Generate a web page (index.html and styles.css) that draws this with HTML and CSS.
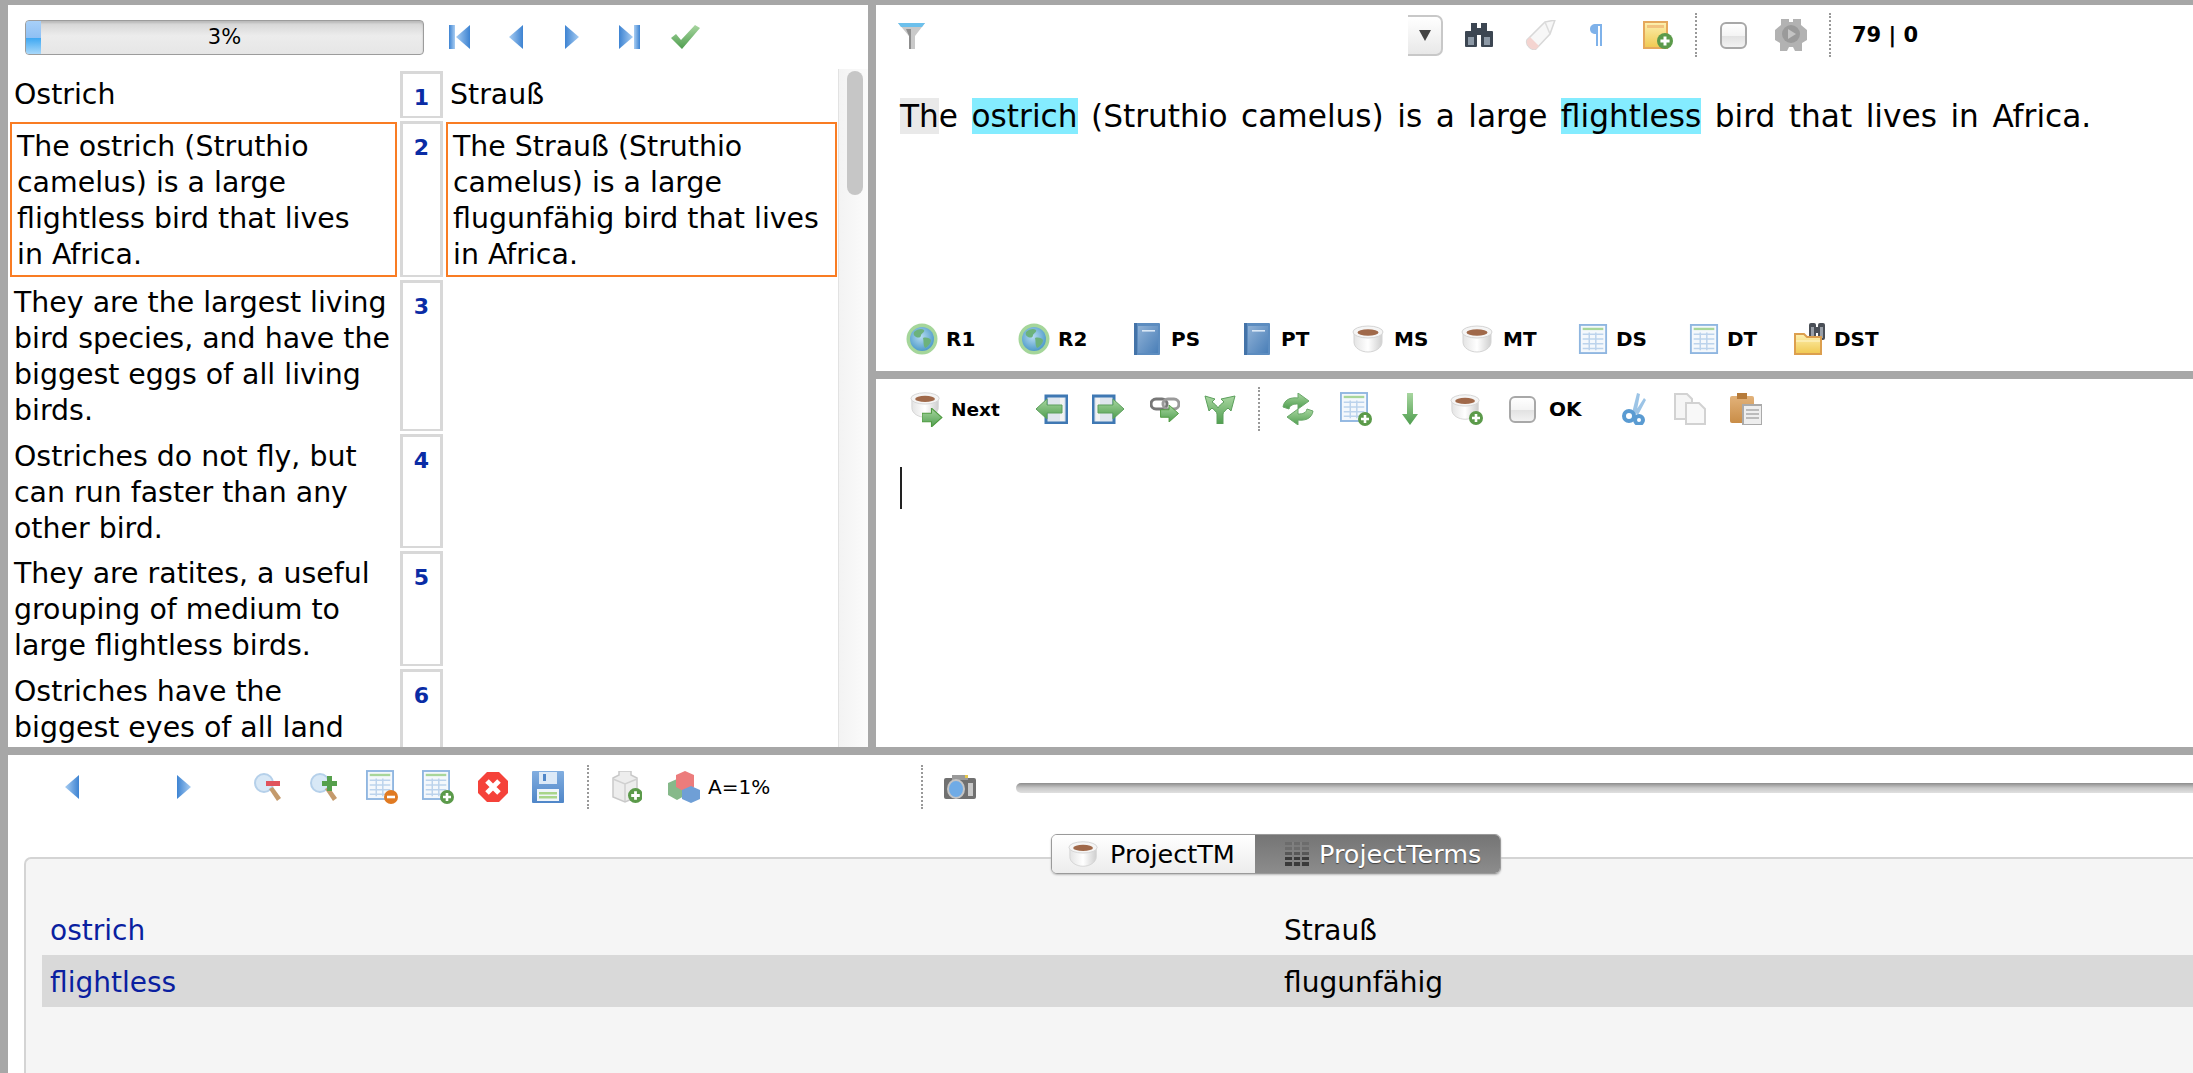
FILE: index.html
```html
<!DOCTYPE html>
<html lang="en">
<head>
<meta charset="utf-8">
<title>OmegaT-style editor</title>
<link rel="stylesheet" href="styles.css">
</head>
<body>
<svg class="defs" width="0" height="0" aria-hidden="true">
  <defs>
    <linearGradient id="gBlue" x1="0" y1="0" x2="0" y2="1"><stop offset="0" stop-color="#a9cdf0"/><stop offset="1" stop-color="#3f86d0"/></linearGradient>
    <linearGradient id="gNavR" x1="0" y1="0" x2="1" y2="0"><stop offset="0" stop-color="#3d83d2"/><stop offset="1" stop-color="#a8cdf2"/></linearGradient>
    <linearGradient id="gNavL" x1="0" y1="0" x2="1" y2="0"><stop offset="0" stop-color="#a8cdf2"/><stop offset="1" stop-color="#3d83d2"/></linearGradient>
    <linearGradient id="gGreen" x1="0" y1="0" x2="0" y2="1"><stop offset="0" stop-color="#a8d6a0"/><stop offset="1" stop-color="#4f9e4f"/></linearGradient>
    <linearGradient id="gBook" x1="0" y1="0" x2="1" y2="1"><stop offset="0" stop-color="#8fb1d6"/><stop offset="1" stop-color="#4a7fb8"/></linearGradient>
    <linearGradient id="gCup" x1="0" y1="0" x2="1" y2="0"><stop offset="0" stop-color="#e4e4e4"/><stop offset=".5" stop-color="#fff"/><stop offset="1" stop-color="#cfcfcf"/></linearGradient>
    <linearGradient id="gFolder" x1="0" y1="0" x2="0" y2="1"><stop offset="0" stop-color="#fdf0b0"/><stop offset="1" stop-color="#f0c850"/></linearGradient>
    <linearGradient id="gPaste" x1="0" y1="0" x2="0" y2="1"><stop offset="0" stop-color="#e2b27a"/><stop offset="1" stop-color="#c98d47"/></linearGradient>
    <linearGradient id="gSave" x1="0" y1="0" x2="0" y2="1"><stop offset="0" stop-color="#82aee0"/><stop offset="1" stop-color="#4f86c8"/></linearGradient>
    <radialGradient id="gGlobe" cx=".45" cy=".4" r=".6"><stop offset="0" stop-color="#b6dcf2"/><stop offset="1" stop-color="#4f9bc9"/></radialGradient>

    <symbol id="i-first" viewBox="0 0 22 24"><rect x="0" y="0" width="6" height="24" fill="url(#gNavR)"/><path d="M21 0v24L7 12z" fill="url(#gNavL)"/></symbol>
    <symbol id="i-prev" viewBox="0 0 16 24"><path d="M15 0v24L1 12z" fill="url(#gNavL)"/></symbol>
    <symbol id="i-next" viewBox="0 0 16 24"><path d="M1 0v24l14-12z" fill="url(#gNavR)"/></symbol>
    <symbol id="i-last" viewBox="0 0 22 24"><path d="M1 0v24l14-12z" fill="url(#gNavR)"/><rect x="16" y="0" width="6" height="24" fill="url(#gNavL)"/></symbol>
    <symbol id="i-check" viewBox="0 0 30 24"><path d="M1 13l5-4 5 6L25 0l5 3-18 21z" fill="url(#gGreen)"/></symbol>

    <symbol id="i-plus" viewBox="0 0 14 14"><circle cx="7" cy="7" r="7" fill="#5b9a4a"/><path d="M7 3v8M3 7h8" stroke="#fff" stroke-width="2.6"/></symbol>
    <symbol id="i-minus" viewBox="0 0 14 14"><circle cx="7" cy="7" r="7" fill="#e07a22"/><path d="M3 7h8" stroke="#fff" stroke-width="2.6"/></symbol>
    <symbol id="i-goarrow" viewBox="0 0 20 18"><path d="M0 5h9V0l10 9-10 9v-5H0z" fill="url(#gGreen)" stroke="#4e9a3f"/></symbol>

    <symbol id="i-globe" viewBox="0 0 32 32"><circle cx="16" cy="16" r="15.5" fill="#a5d69a"/><circle cx="16" cy="16" r="12" fill="url(#gGlobe)"/><path d="M8 9c3-3 8-4 10-2 1 2-2 3-3 5 0 3-3 3-5 2-2-1-3-3-2-5zM17 15c3-1 7 0 8 2 0 3-3 7-6 8-2-3-1-6-2-10z" fill="#6cb27c"/></symbol>
    <symbol id="i-book" viewBox="0 0 26 32"><rect x="0" y="0" width="26" height="32" rx="1" fill="#5d8dc0"/><rect x="4" y="3" width="20" height="27" fill="url(#gBook)"/><rect x="8" y="7" width="13" height="1.6" fill="#d9e7f5"/><rect x="0" y="0" width="3" height="32" fill="#4473a8"/></symbol>
    <symbol id="i-cup" viewBox="0 0 34 28"><path d="M2 7h28v10c0 6-7 10-14 10S2 23 2 17z" fill="url(#gCup)" stroke="#d4d4d4"/><ellipse cx="16" cy="7" rx="15" ry="6" fill="#f5f5f5" stroke="#d4d4d4"/><ellipse cx="16" cy="7.5" rx="10.5" ry="3.2" fill="#a0694a"/></symbol>
    <symbol id="i-cupnext" viewBox="0 0 34 36"><use href="#i-cup" x="0" y="0" width="32" height="28"/><use href="#i-goarrow" x="12" y="17" width="21" height="19"/></symbol>
    <symbol id="i-cupadd" viewBox="0 0 34 32"><use href="#i-cup" x="0" y="0" width="32" height="28"/><use href="#i-plus" x="19" y="18" width="14" height="14"/></symbol>

    <symbol id="i-table" viewBox="0 0 30 32"><rect x="1" y="1" width="28" height="30" fill="#f4f8fc" stroke="#8fb6e0" stroke-width="2"/><rect x="4" y="4" width="22" height="2.5" fill="#a8d69a"/><path d="M4 11h22M4 16h22M4 21h22M4 26h22M11 9v19M18 9v19" stroke="#bcd3ec" stroke-width="1.6"/></symbol>
    <symbol id="i-tableadd" viewBox="0 0 32 34"><use href="#i-table" x="0" y="0" width="28" height="30"/><use href="#i-plus" x="18" y="20" width="14" height="14"/></symbol>
    <symbol id="i-tabledel" viewBox="0 0 32 34"><use href="#i-table" x="0" y="0" width="28" height="30"/><use href="#i-minus" x="18" y="20" width="14" height="14"/></symbol>

    <symbol id="i-folderbin" viewBox="0 0 32 32"><g fill="#4a4f57"><rect x="15" y="0" width="7" height="17" rx="2"/><rect x="24" y="0" width="7" height="17" rx="2"/><rect x="21" y="4" width="4" height="6"/></g><path d="M17 4h3v11h-3zM26 4h3v11h-3z" fill="#9aa0a8"/><path d="M1 11h9l3 3h14v17H1z" fill="url(#gFolder)" stroke="#dc9f4e" stroke-width="2"/><path d="M2 18h24" stroke="#fff7cf"/></symbol>

    <symbol id="i-filter" viewBox="0 0 27 28"><path d="M0 2h27L17 15v13h-6V15z" fill="#c9c9c9"/><path d="M8 8h5v20h-2V15z" fill="#8d8d8d"/><path d="M0 2h27l-3 4H3z" fill="#6cc0ec"/></symbol>
    <symbol id="i-binoc" viewBox="0 0 28 24"><g fill="#3c4652"><rect x="6" y="0" width="6" height="9"/><rect x="16" y="0" width="6" height="9"/><rect x="0" y="8" width="12" height="16" rx="1"/><rect x="16" y="8" width="12" height="16" rx="1"/><rect x="11" y="5" width="6" height="7"/></g><path d="M3 14h6v8H3zM19 14h6v8h-6z" fill="#8d99a6"/></symbol>
    <symbol id="i-eraser" viewBox="0 0 34 30"><path d="M22 2l10-2-5 14L13 29c-4 2-11-4-9-9z" fill="#f7f7f7" stroke="#d8d8d8" stroke-width="1.5"/><path d="M4 20c-2 5 5 11 9 9l3-3-9-9z" fill="#f4d4d0"/><path d="M22 2l5 12" stroke="#dcdcdc" stroke-width="1.5"/></symbol>
    <symbol id="i-pilcrow" viewBox="0 0 14 24"><path d="M6 1C2 1 0 3 0 6s2 5 6 5v12h2V3h2v20h2V1z" fill="#7fb2ea"/></symbol>
    <symbol id="i-note" viewBox="0 0 30 28"><rect x="1" y="1" width="23" height="26" fill="url(#gFolder)" stroke="#e5a85c" stroke-width="2"/><rect x="4" y="4" width="17" height="3" fill="#f2c37e"/><use href="#i-plus" x="14" y="12" width="16" height="16"/></symbol>
    <symbol id="i-gear" viewBox="0 0 32 32"><path d="M6 0h8v3h4V0h8v6l6 5v10l-5 3v8h-7l-2-4h-4l-2 4H5v-8l-5-3V11l6-5z" fill="#b2b2b2"/><circle cx="16" cy="15" r="9" fill="#9a9a9a"/><path d="M13 10l8 5-8 5z" fill="#c4c4c4"/></symbol>

    <symbol id="i-srcback" viewBox="0 0 32 30"><rect x="10" y="2" width="21" height="27" fill="#dfe6ee" stroke="#3f78b3" stroke-width="3"/><rect x="24" y="4" width="4" height="23" fill="#f2f2f2"/><path d="M0 15L11 5v6h15v8H11v6z" fill="url(#gGreen)" stroke="#5c9f5c"/></symbol>
    <symbol id="i-srcfwd" viewBox="0 0 32 30"><rect x="1" y="2" width="21" height="27" fill="#dfe6ee" stroke="#3f78b3" stroke-width="3"/><rect x="4" y="4" width="4" height="23" fill="#f2f2f2"/><path d="M32 15L21 5v6H6v8h15v6z" fill="url(#gGreen)" stroke="#5c9f5c"/></symbol>
    <symbol id="i-link" viewBox="0 0 30 26"><rect x="1" y="3" width="16" height="10" rx="5" fill="none" stroke="#777" stroke-width="3"/><rect x="13" y="3" width="16" height="10" rx="5" fill="none" stroke="#9a9a9a" stroke-width="3"/><use href="#i-goarrow" x="10" y="9" width="20" height="17"/></symbol>
    <symbol id="i-fork" viewBox="0 0 32 30"><path d="M13 30h6V20c0-2 3-4 5-6l3 3 4-15-14 3 3 3c-3 2-5 4-6 6-1-2-3-4-6-6l3-3L1 2l4 15 3-3c2 2 5 4 5 6z" fill="url(#gGreen)" stroke="#5c9f5c"/></symbol>
    <symbol id="i-sync" viewBox="0 0 34 32"><path d="M2 14C3 7 9 4 17 5V0l11 8-11 8v-5c-5 0-8 1-9 5z" fill="url(#gGreen)" stroke="#6aa86a"/><path d="M32 18c-1 7-7 10-15 9v5L6 24l11-8v5c5 0 8-1 9-5z" fill="url(#gGreen)" stroke="#6aa86a"/></symbol>
    <symbol id="i-down" viewBox="0 0 16 32"><path d="M5 0h6v21h5l-8 11-8-11h5z" fill="url(#gGreen)"/></symbol>
    <symbol id="i-cut" viewBox="0 0 24 32"><path d="M10 20L15 0l3 1-4 21zM13 19L22 5l2 2-8 15z" fill="#9cc4e6"/><circle cx="7" cy="23" r="5" fill="none" stroke="#5a9bd2" stroke-width="4"/><circle cx="17" cy="27" r="4" fill="none" stroke="#5a9bd2" stroke-width="4"/></symbol>
    <symbol id="i-copy" viewBox="0 0 32 32"><path d="M1 1h12l5 5v20H1z" fill="#f5f5f5" stroke="#d2d2d2" stroke-width="2"/><path d="M12 10h13l6 6v15H12z" fill="#f8f8f8" stroke="#d2d2d2" stroke-width="2"/></symbol>
    <symbol id="i-paste" viewBox="0 0 32 32"><rect x="0" y="3" width="24" height="27" rx="2" fill="url(#gPaste)"/><rect x="7" y="0" width="10" height="6" fill="#b67b3a"/><rect x="13" y="12" width="19" height="20" fill="#eee" stroke="#aaa" stroke-width="2"/><path d="M16 17h13M16 21h13M16 25h13" stroke="#aaa" stroke-width="1.6"/></symbol>

    <symbol id="i-zoomout" viewBox="0 0 28 28"><circle cx="10" cy="10" r="9" fill="#d8e8f6" stroke="#b5d0ea" stroke-width="2"/><path d="M15 16l4-2 8 11-4 3z" fill="#c49a6c"/><rect x="12" y="8" width="14" height="5" fill="#e0535c"/></symbol>
    <symbol id="i-zoomin" viewBox="0 0 28 28"><circle cx="10" cy="10" r="9" fill="#d8e8f6" stroke="#b5d0ea" stroke-width="2"/><path d="M15 16l4-2 8 11-4 3z" fill="#c49a6c"/><path d="M17 3h5v5h5v5h-5v5h-5v-5h-5V8h5z" fill="#56a04c"/></symbol>
    <symbol id="i-stop" viewBox="0 0 30 30"><path d="M9 0h12l9 9v12l-9 9H9l-9-9V9z" fill="#f5423a"/><path d="M9 9l12 12M21 9L9 21" stroke="#fff" stroke-width="5"/></symbol>
    <symbol id="i-save" viewBox="0 0 32 32"><rect x="0" y="0" width="32" height="32" rx="1" fill="url(#gSave)"/><rect x="7" y="1" width="18" height="12" fill="#dce9f7"/><rect x="11" y="3" width="3" height="7" fill="#4f86c8"/><rect x="5" y="18" width="22" height="12" fill="#f0f5fa"/><rect x="7" y="21" width="18" height="2.5" fill="#a9d58a"/><rect x="7" y="25" width="18" height="2.5" fill="#a9d58a"/></symbol>
    <symbol id="i-blocks" viewBox="0 0 32 32"><path d="M3 7l6-3v-4h12v4l6 3v19l-12 5-12-5z" fill="#ededed" stroke="#c9c9c9" stroke-width="1.5"/><path d="M3 8l12 5 12-5M15 13v17" stroke="#d0d0d0" stroke-width="1.5" fill="none"/><use href="#i-plus" x="18" y="17" width="15" height="15"/></symbol>
    <symbol id="i-color" viewBox="0 0 32 32"><path d="M0 12l9-4 9 4v12l-9 5-9-5z" fill="#86b98a"/><path d="M8 4l9-4 9 4v12l-9 5-9-5z" fill="#ec7c7c"/><path d="M14 19l9-4 9 4v9l-9 4-9-4z" fill="#6f9fd6"/></symbol>
    <symbol id="i-camera" viewBox="0 0 32 24"><rect x="0" y="3" width="32" height="21" rx="2" fill="#707070"/><rect x="8" y="0" width="16" height="5" fill="#9a9a9a"/><rect x="21" y="0" width="3" height="3" fill="#e6c84c"/><ellipse cx="12" cy="14" rx="8" ry="9" fill="#6fabe6" stroke="#c4c4c4" stroke-width="2"/><rect x="24" y="8" width="5" height="13" fill="#c8c8c8"/></symbol>
    <symbol id="i-terms" viewBox="0 0 24 24"><path d="M0 20h24v4H0zM0 15h24v3H0z" fill="#3a3a3a"/><path d="M0 10h24v3H0z" fill="#575757"/><path d="M0 5h24v3H0zM0 0h24v3H0z" fill="#6c6c6c"/><path d="M7 0h2v24H7zM15 0h2v24h-2z" fill="#808080"/></symbol>
  </defs>
</svg>

<div class="app">
  <section class="pane pane-segments">
    <div class="seg-toolbar">
      <div class="progress"><span class="progress-fill"></span><span class="progress-label">3%</span></div>
      <div class="nav-icons">
        <svg width="22" height="24"><use href="#i-first"/></svg>
        <svg width="16" height="24"><use href="#i-prev"/></svg>
        <svg width="16" height="24"><use href="#i-next"/></svg>
        <svg width="22" height="24"><use href="#i-last"/></svg>
        <svg width="30" height="24"><use href="#i-check"/></svg>
      </div>
    </div>
    <div class="seg-scroller">
      <div class="seg-grid">
        <div class="seg seg-first">Ostrich</div><div class="num num-first">1</div><div class="seg seg-first">Strauß</div>
        <div class="seg seg-active">The ostrich (Struthio<br>camelus) is a large<br>flightless bird that lives<br>in Africa.</div><div class="num">2</div><div class="seg seg-active">The Strauß (Struthio<br>camelus) is a large<br>flugunfähig bird that lives<br>in Africa.</div>
        <div class="seg">They are the largest living<br>bird species, and have the<br>biggest eggs of all living<br>birds.</div><div class="num">3</div><div class="seg"></div>
        <div class="seg">Ostriches do not fly, but<br>can run faster than any<br>other bird.</div><div class="num">4</div><div class="seg"></div>
        <div class="seg">They are ratites, a useful<br>grouping of medium to<br>large flightless birds.</div><div class="num">5</div><div class="seg"></div>
        <div class="seg seg-last">Ostriches have the<br>biggest eyes of all land</div><div class="num seg-last">6</div><div class="seg seg-last"></div>
      </div>
      <div class="scrollbar"><span class="scroll-thumb"></span></div>
    </div>
  </section>

  <div class="right-col">
    <section class="pane pane-source">
      <div class="src-toolbar">
        <svg width="27" height="28"><use href="#i-filter"/></svg>
        <span class="combo"><span class="combo-caret"></span></span>
        <svg width="28" height="24"><use href="#i-binoc"/></svg>
        <svg width="34" height="30"><use href="#i-eraser"/></svg>
        <svg width="14" height="24"><use href="#i-pilcrow"/></svg>
        <svg width="30" height="28"><use href="#i-note"/></svg>
        <span class="vsep"></span>
        <span class="check"></span>
        <svg width="32" height="32"><use href="#i-gear"/></svg>
        <span class="vsep"></span>
        <span class="counter">79 | 0</span>
      </div>
      <p class="source-text"><span class="hl-seen">Th</span>e <span class="hl-term">ostrich</span> (Struthio camelus) is a large <span class="hl-term">flightless</span> bird that lives in Africa.</p>
      <div class="ref-bar">
        <span class="ref"><svg width="32" height="32"><use href="#i-globe"/></svg>R1</span>
        <span class="ref"><svg width="32" height="32"><use href="#i-globe"/></svg>R2</span>
        <span class="ref ref-wide"><svg width="26" height="32"><use href="#i-book"/></svg>PS</span>
        <span class="ref ref-wide"><svg width="26" height="32"><use href="#i-book"/></svg>PT</span>
        <span class="ref"><svg width="34" height="28"><use href="#i-cup"/></svg>MS</span>
        <span class="ref"><svg width="34" height="28"><use href="#i-cup"/></svg>MT</span>
        <span class="ref"><svg width="30" height="30"><use href="#i-table"/></svg>DS</span>
        <span class="ref"><svg width="30" height="30"><use href="#i-table"/></svg>DT</span>
        <span class="ref"><svg width="32" height="32"><use href="#i-folderbin"/></svg>DST</span>
      </div>
    </section>

    <section class="pane pane-edit">
      <div class="edit-toolbar">
        <span class="ref ref-next"><svg width="34" height="36"><use href="#i-cupnext"/></svg>Next</span>
        <svg width="32" height="30"><use href="#i-srcback"/></svg>
        <svg width="32" height="30"><use href="#i-srcfwd"/></svg>
        <svg width="30" height="26"><use href="#i-link"/></svg>
        <svg width="32" height="30"><use href="#i-fork"/></svg>
        <span class="vsep"></span>
        <svg width="34" height="32"><use href="#i-sync"/></svg>
        <svg width="32" height="34"><use href="#i-tableadd"/></svg>
        <svg width="16" height="32"><use href="#i-down"/></svg>
        <svg width="34" height="32"><use href="#i-cupadd"/></svg>
        <span class="ref ref-ok"><span class="check"></span>OK</span>
        <svg width="24" height="32"><use href="#i-cut"/></svg>
        <svg width="32" height="32"><use href="#i-copy"/></svg>
        <svg width="32" height="32"><use href="#i-paste"/></svg>
      </div>
      <div class="caret"></div>
    </section>
  </div>

  <section class="pane pane-bottom">
    <div class="bottom-toolbar">
      <svg width="16" height="24"><use href="#i-prev"/></svg>
      <svg width="16" height="24"><use href="#i-next"/></svg>
      <svg width="28" height="28"><use href="#i-zoomout"/></svg>
      <svg width="28" height="28"><use href="#i-zoomin"/></svg>
      <svg width="32" height="34"><use href="#i-tabledel"/></svg>
      <svg width="32" height="34"><use href="#i-tableadd"/></svg>
      <svg width="30" height="30"><use href="#i-stop"/></svg>
      <svg width="32" height="32"><use href="#i-save"/></svg>
      <span class="vsep"></span>
      <svg width="32" height="32"><use href="#i-blocks"/></svg>
      <span class="match"><svg width="32" height="32"><use href="#i-color"/></svg>A=1%</span>
      <span class="vsep"></span>
      <svg width="32" height="24"><use href="#i-camera"/></svg>
      <span class="slider"></span>
    </div>
    <div class="tab-panel">
      <div class="tabs">
        <span class="tab"><svg width="32" height="28"><use href="#i-cup"/></svg>ProjectTM</span>
        <span class="tab tab-on"><svg width="24" height="24"><use href="#i-terms"/></svg>ProjectTerms</span>
      </div>
      <div class="terms">
        <div class="term-row"><span class="term-src">ostrich</span><span>Strauß</span></div>
        <div class="term-row term-row-on"><span class="term-src">flightless</span><span>flugunfähig</span></div>
      </div>
    </div>
  </section>
</div>
</body>
</html>
```

FILE: styles.css
```css
* { box-sizing: border-box; }
html, body { margin: 0; height: 100%; overflow: hidden; }
body { background: #a7a7a7; font-family: "DejaVu Sans", sans-serif; color: #000; }
.defs { position: absolute; }
svg { display: block; flex: none; }

.app {
  width: 2193px;
  height: 1073px;
  padding: 5px 0 0 8px;
  display: grid;
  grid-template-columns: 860px 1317px;
  grid-template-rows: 742px 318px;
  gap: 8px;
}
.pane { background: #fff; overflow: hidden; }

/* segments pane */
.pane-segments { display: flex; flex-direction: column; }
.seg-toolbar { height: 64px; flex: none; padding-left: 17px; display: flex; align-items: center; }
.progress {
  width: 399px; height: 35px; position: relative;
  margin-top: 1px;
  border: 1px solid #9c9c9c; border-radius: 4px;
  background: linear-gradient(#d2d2d2, #ececec 45%, #e6e6e6);
  display: flex; align-items: center; justify-content: center;
  box-shadow: inset 0 2px 2px #bbb;
}
.progress-fill {
  position: absolute; left: 0; top: 0; bottom: 0; width: 15px;
  border-radius: 3px 0 0 3px;
  background: linear-gradient(#a8d0f8, #8fc0f4 50%, #3fa8f2 52%, #a8d8fa);
}
.progress-label { font-size: 21px; margin-top: -2px; }
.nav-icons {
  margin-left: 25px;
  display: grid;
  grid-template-columns: 59px 56px 54px 52px auto;
  align-items: center;
}
.seg-scroller { flex: 1; min-height: 0; display: flex; overflow: hidden; }
.seg-grid {
  width: 830px; flex: none;
  padding: 2px 0 0 2px;
  display: grid;
  grid-template-columns: 387px 43px 391px;
  grid-auto-rows: max-content;
  column-gap: 3px;
  row-gap: 3px;
  align-content: start;
  font-size: 28.4px;
  line-height: 36px;
}
.seg { padding: 5px 2px 1.5px 4px; white-space: nowrap; }
.seg-first { padding: 6px 2px 5px 4px; }
.seg-active { border: 2px solid #f97c23; padding: 5px 2px 2px 5px; margin-top: 1px; }
.seg-last { height: 100px; }
.num {
  border: 3px solid #d8d8d8; border-bottom-width: 2px;
  font-weight: 700; font-size: 22px; line-height: 30px;
  color: #0a2ca5; text-align: center;
  padding-top: 9px;
}
.num-first { height: 47px; }
.scrollbar {
  width: 30px; flex: none;
  border-left: 1px solid #e2e2e2;
  background: linear-gradient(90deg, #f3f3f3, #fbfbfb);
  padding: 2px 5px 0 8px;
}
.scroll-thumb { display: block; width: 16px; height: 124px; border-radius: 8px; background: #c6c6c6; }

/* right column */
.right-col { display: grid; grid-template-rows: 366px 368px; gap: 8px; min-width: 0; }
.pane-source { display: flex; flex-direction: column; }
.src-toolbar {
  height: 60px; flex: none; padding-left: 22px;
  display: grid;
  grid-template-columns: 510px 57px 58px 67px 53px 52px 25px 55px 54px 23px auto;
  align-items: center; justify-content: start;
}
.combo {
  width: 35px; height: 41px; display: flex; align-items: center; justify-content: center;
  border: 2px solid #c8c8c8; border-left: 0; border-radius: 0 7px 7px 0;
  background: linear-gradient(#fff, #e8e8e8);
}
.combo-caret { width: 0; height: 0; border: 6px solid transparent; border-top: 11px solid #444; border-bottom: 0; }
.vsep { display: block; width: 0; height: 44px; border-left: 2px dotted #999; }
.check {
  display: block; width: 27px; height: 27px;
  border: 2px solid #a8a8a8; border-radius: 6px;
  background: linear-gradient(#fff, #f4f4f4 50%, #e2e2e2 52%, #f2f2f2);
}
.counter { font-weight: 700; font-size: 21px; }
.source-text {
  margin: 30px 0 0; padding-left: 24px;
  font-size: 31.2px; word-spacing: 3.6px; line-height: 42px; white-space: nowrap;
}
.hl-seen { background: #e9e9e9; }
.hl-term { background: #84ecff; }
.ref-bar {
  margin-top: auto; height: 64px; flex: none; padding-left: 30px;
  display: grid;
  grid-template-columns: 112px 116px 110px 108px 109px 117px 111px 105px auto;
  align-items: center; justify-content: start;
}
.ref { display: flex; align-items: center; gap: 8px; font-weight: 700; font-size: 20px; }
.ref-wide { gap: 11px; }
.ref-ok { gap: 13px; }
.ref-next { gap: 7px; font-size: 18.5px; }

.edit-toolbar {
  height: 60px; padding-left: 34px;
  display: grid;
  grid-template-columns: 126px 56px 58px 54px 54px 23px 59px 62px 48px 59px 113px 52px 56px auto;
  align-items: center; justify-content: start;
}
.caret { width: 2px; height: 42px; margin: 28px 0 0 24px; background: #222; }

/* bottom pane */
.pane-bottom { grid-column: 1 / -1; display: flex; flex-direction: column; }
.bottom-toolbar {
  height: 64px; flex: none; padding-left: 56px;
  display: grid;
  grid-template-columns: 112px 78px 56px 56px 56px 56px 54px 55px 23px 58px 253px 23px 72px minmax(0, 1fr);
  align-items: center;
}
.match { display: flex; align-items: center; gap: 8px; font-size: 20px; }
.slider {
  display: block; height: 10px; margin-top: 2px;
  border-radius: 5px 0 0 5px;
  background: linear-gradient(#8c8c8c, #c8c8c8 50%, #e0e0e0);
}
.tab-panel {
  flex: 1; margin: 38px 0 0 16px; min-height: 0;
  background: #f5f5f5;
  border: solid #d4d4d4; border-width: 2px 0 0 2px;
  border-radius: 7px 0 0 0;
  padding-left: 16px;
}
.tabs {
  height: 40px; margin: -25px 0 0 1009px; display: flex; width: 450px;
  border: 1px solid #9a9a9a; border-radius: 6px;
  box-shadow: 0 1px 2px #bbb;
  overflow: hidden;
  font-size: 25.5px;
}
.tab {
  width: 203px; flex: none; display: flex; align-items: center; gap: 10px; padding-left: 16px;
  background: linear-gradient(#fff, #ececec);
}
.tab-on {
  flex: 1; padding-left: 30px; gap: 10px; color: #fff;
  background: linear-gradient(#757575, #8c8c8c);
  text-shadow: 0 1px 1px #444;
}
.terms { margin-top: 29px; font-size: 28px; }
.term-row { height: 52px; padding-left: 8px; display: grid; grid-template-columns: 1234px 1fr; align-items: center; }
.term-row span { padding-top: 2px; }
.term-row-on { background: #d9d9d9; }
.term-src { color: #0a1fa0; }
```
